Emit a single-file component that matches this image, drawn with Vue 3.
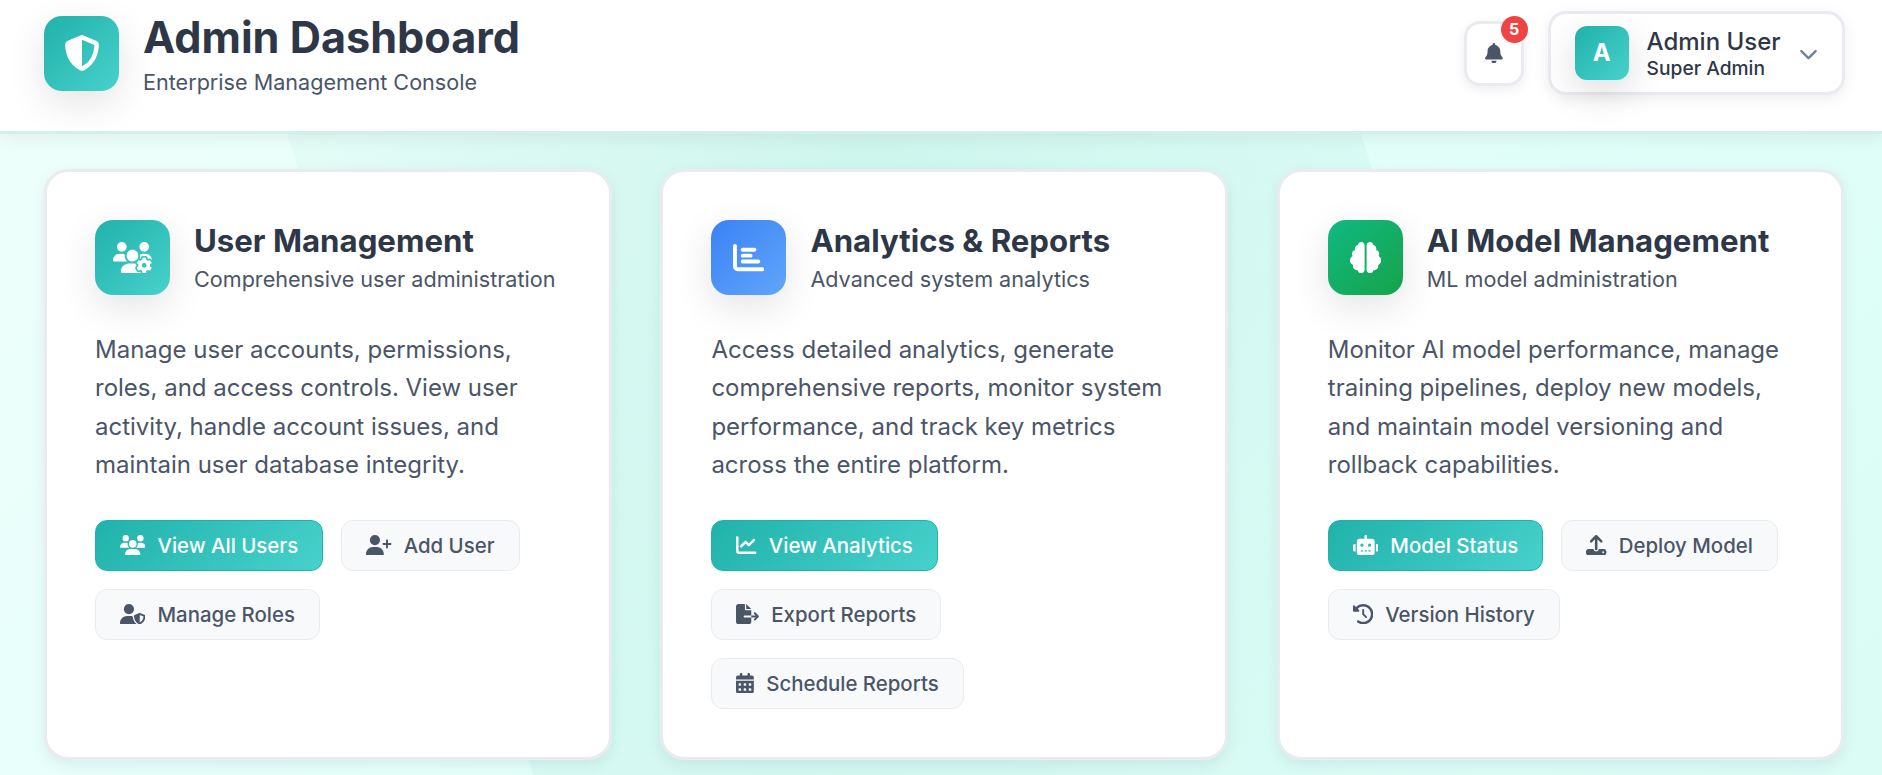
<script setup>
const icons = {
  shield: [512, 'M256 0c4.6 0 9.2 1 13.4 2.9L457.7 82.8c22 9.3 38.4 31 38.3 57.2c-.5 99.2-41.3 280.7-213.6 363.2c-16.7 8-36.1 8-52.8 0C57.3 420.7 16.5 239.2 16 140c-.1-26.2 16.3-47.9 38.3-57.2L242.7 2.9C246.8 1 251.4 0 256 0zm0 66.8V444.8C394 378 431.1 230.1 432 141.4L256 66.8l0 0z'],
  bell: [448, 'M224 0c-17.7 0-32 14.3-32 32V51.2C119 66 64 130.6 64 208v18.8c0 47-17.3 92.4-48.5 127.6l-7.4 8.3c-8.4 9.4-10.4 22.9-5.3 34.4S19.4 416 32 416H416c12.6 0 24-7.4 29.2-18.9s3.1-25-5.3-34.4l-7.4-8.3C401.3 319.2 384 273.9 384 226.8V208c0-77.4-55-142-128-156.8V32c0-17.7-14.3-32-32-32zm45.3 493.3c12-12 18.7-28.3 18.7-45.3H224 160c0 17 6.7 33.3 18.7 45.3s28.3 18.7 45.3 18.7s33.3-6.7 45.3-18.7z'],
  chevron: [512, 'M233.4 406.6c12.5 12.5 32.8 12.5 45.3 0l192-192c12.5-12.5 12.5-32.8 0-45.3s-32.8-12.5-45.3 0L256 338.7 86.6 169.4c-12.5-12.5-32.8-12.5-45.3 0s-12.5 32.8 0 45.3l192 192z'],
  users: [640, 'M144 0a80 80 0 1 1 0 160A80 80 0 1 1 144 0zM512 0a80 80 0 1 1 0 160A80 80 0 1 1 512 0zM0 298.7C0 239.8 47.8 192 106.7 192h42.7c15.9 0 31 3.5 44.6 9.7c-1.3 7.2-1.9 14.7-1.9 22.3c0 38.2 16.8 72.5 43.3 96c-.2 0-.4 0-.7 0H21.3C9.6 320 0 310.4 0 298.7zM405.3 320c-.2 0-.4 0-.7 0c26.6-23.5 43.3-57.8 43.3-96c0-7.6-.7-15-1.9-22.3c13.6-6.3 28.7-9.7 44.6-9.7h42.7C592.2 192 640 239.8 640 298.7c0 11.8-9.6 21.3-21.3 21.3H405.3zM224 224a96 96 0 1 1 192 0 96 96 0 1 1 -192 0zM128 485.3C128 411.7 187.7 352 261.3 352H378.7C452.3 352 512 411.7 512 485.3c0 14.7-11.9 26.7-26.7 26.7H154.7c-14.7 0-26.7-11.9-26.7-26.7z'],
  usersGear: [640, 'M144 160A80 80 0 1 0 144 0a80 80 0 1 0 0 160zm368 0A80 80 0 1 0 512 0a80 80 0 1 0 0 160zM0 298.7C0 310.4 9.6 320 21.3 320H234.7c.2 0 .4 0 .7 0c-26.6-23.5-43.3-57.8-43.3-96c0-7.6 .7-15 1.9-22.3c-13.6-6.3-28.7-9.7-44.6-9.7H106.7C47.8 192 0 239.8 0 298.7zM320 320c24 0 45.9-8.8 62.7-23.3c2.5-3.7 5.2-7.3 8-10.7c2.7-3.3 5.7-6.1 9-8.3C410 262.3 416 243.9 416 224c0-53-43-96-96-96s-96 43-96 96s43 96 96 96zm65.4 60.2c-10.3-5.9-18.1-16.2-20.8-28.2H261.3C187.7 352 128 411.7 128 485.3c0 14.7 11.9 26.7 26.7 26.7H455.2c-2.1-5.2-3.2-10.9-3.2-16.4v-3c-1.3-.7-2.7-1.5-4-2.3l-2.6 1.5c-16.8 9.7-40.5 8-54.7-9.7c-4.5-5.6-8.6-11.5-12.4-17.6l-.1-.2-.1-.2-2.4-4.1-.1-.2-.1-.2c-3.4-6.2-6.4-12.6-9-19.3c-8.2-21.2 2.2-42.6 19-52.3l2.7-1.5c0-.8 0-1.5 0-2.3s0-1.5 0-2.3l-2.7-1.5zM533.3 192H490.7c-15.9 0-31 3.5-44.6 9.7c1.3 7.2 1.9 14.7 1.9 22.3c0 17.4-3.5 33.9-9.7 49c2.5 .9 4.9 2 7.1 3.3l2.6 1.5c1.3-.8 2.6-1.6 4-2.3v-3c0-19.4 13.3-39.1 35.8-42.6c7.9-1.2 16-1.9 24.2-1.9s16.3 .6 24.2 1.9c22.5 3.5 35.8 23.2 35.8 42.6v3c1.3 .7 2.7 1.5 4 2.3l2.6-1.5c16.8-9.7 40.5-8 54.7 9.7c2.3 2.8 4.5 5.8 6.6 8.7c-2.1-57.1-49-102.7-106.6-102.7zm91.3 163.9c6.3-3.6 9.5-11.1 6.8-18c-2.1-5.5-4.6-10.8-7.4-15.9l-2.3-4c-3.1-5.1-6.5-9.9-10.2-14.5c-4.6-5.7-12.7-6.7-19-3L574.4 311c-8.9-7.6-19.1-13.6-30.4-17.6v-21c0-7.3-4.9-13.8-12.1-14.9c-6.5-1-13.1-1.5-19.9-1.5s-13.4 .5-19.9 1.5c-7.2 1.1-12.1 7.6-12.1 14.9v21c-11.2 4-21.5 10-30.4 17.6l-18.2-10.5c-6.3-3.6-14.4-2.6-19 3c-3.7 4.6-7.1 9.5-10.2 14.6l-2.3 3.9c-2.8 5.1-5.3 10.4-7.4 15.9c-2.6 6.8 .5 14.3 6.8 17.9l18.2 10.5c-1 5.7-1.6 11.6-1.6 17.6s.6 11.9 1.6 17.5l-18.2 10.5c-6.3 3.6-9.5 11.1-6.8 17.9c2.1 5.5 4.6 10.7 7.4 15.8l2.4 4.1c3 5.1 6.4 9.9 10.1 14.5c4.6 5.7 12.7 6.7 19 3L449.6 457c8.9 7.6 19.2 13.6 30.4 17.6v21c0 7.3 4.9 13.8 12.1 14.9c6.5 1 13.1 1.5 19.9 1.5s13.4-.5 19.9-1.5c7.2-1.1 12.1-7.6 12.1-14.9v-21c11.2-4 21.5-10 30.4-17.6l18.2 10.5c6.3 3.6 14.4 2.6 19-3c3.7-4.6 7.1-9.4 10.1-14.5l2.4-4.2c2.8-5.1 5.3-10.3 7.4-15.8c2.6-6.8-.5-14.3-6.8-17.9l-18.2-10.5c1-5.7 1.6-11.6 1.6-17.5s-.6-11.9-1.6-17.6l18.2-10.5zM472 384a40 40 0 1 1 80 0 40 40 0 1 1 -80 0z'],
  userPlus: [640, 'M96 128a128 128 0 1 1 256 0A128 128 0 1 1 96 128zM0 482.3C0 383.8 79.8 304 178.3 304h91.4C368.2 304 448 383.8 448 482.3c0 16.4-13.3 29.7-29.7 29.7H29.7C13.3 512 0 498.7 0 482.3zM504 312V248H440c-13.3 0-24-10.7-24-24s10.7-24 24-24h64V136c0-13.3 10.7-24 24-24s24 10.7 24 24v64h64c13.3 0 24 10.7 24 24s-10.7 24-24 24H552v64c0 13.3-10.7 24-24 24s-24-10.7-24-24z'],
  userShield: [640, 'M224 256A128 128 0 1 0 224 0a128 128 0 1 0 0 256zm-45.7 48C79.8 304 0 383.8 0 482.3C0 498.7 13.3 512 29.7 512H418.3c1.8 0 3.5-.2 5.3-.5c-76.3-55.1-99.8-141-103.1-200.2c-16.1-4.8-33.1-7.3-50.7-7.3H178.3zm308.8-78.3l-120 48C358 277.4 352 286.2 352 296c0 63.3 25.9 168.8 134.8 214.2c5.9 2.5 12.6 2.5 18.5 0C614.1 464.8 640 359.3 640 296c0-9.8-6-18.6-15.1-22.3l-120-48c-5.7-2.3-12.1-2.3-17.8 0zM591.4 312c-3.9 50.7-27.2 116.7-95.4 149.7V273.8L591.4 312z'],
  chartBar: [512, 'M32 32c17.7 0 32 14.3 32 32V400c0 8.8 7.2 16 16 16H480c17.7 0 32 14.3 32 32s-14.3 32-32 32H80c-44.2 0-80-35.8-80-80V64C0 46.3 14.3 32 32 32zm96 96c0-17.7 14.3-32 32-32l192 0c17.7 0 32 14.3 32 32s-14.3 32-32 32H160c-17.7 0-32-14.3-32-32zm32 64H288c17.7 0 32 14.3 32 32s-14.3 32-32 32H160c-17.7 0-32-14.3-32-32s14.3-32 32-32zm0 96H416c17.7 0 32 14.3 32 32s-14.3 32-32 32H160c-17.7 0-32-14.3-32-32s14.3-32 32-32z'],
  chartLine: [512, 'M64 64c0-17.7-14.3-32-32-32S0 46.3 0 64V400c0 44.2 35.8 80 80 80H480c17.7 0 32-14.3 32-32s-14.3-32-32-32H80c-8.8 0-16-7.2-16-16V64zm406.6 86.6c12.5-12.5 12.5-32.8 0-45.3s-32.8-12.5-45.3 0L320 210.7l-57.4-57.4c-12.5-12.5-32.8-12.5-45.3 0l-112 112c-12.5 12.5-12.5 32.8 0 45.3s32.8 12.5 45.3 0L240 221.3l57.4 57.4c12.5 12.5 32.8 12.5 45.3 0l128-128z'],
  fileExport: [576, 'M0 64C0 28.7 28.7 0 64 0H224V128c0 17.7 14.3 32 32 32H384V288H216c-13.3 0-24 10.7-24 24s10.7 24 24 24H384V448c0 35.3-28.7 64-64 64H64c-35.3 0-64-28.7-64-64V64zM384 336V288H494.1l-39-39c-9.4-9.4-9.4-24.6 0-33.9s24.6-9.4 33.9 0l80 80c9.4 9.4 9.4 24.6 0 33.9l-80 80c-9.4 9.4-24.6 9.4-33.9 0s-9.4-24.6 0-33.9l39-39H384zm0-208H256V0L384 128z'],
  calendar: [448, 'M128 0c17.7 0 32 14.3 32 32V64H288V32c0-17.7 14.3-32 32-32s32 14.3 32 32V64h48c26.5 0 48 21.5 48 48v48H0V112C0 85.5 21.5 64 48 64H96V32c0-17.7 14.3-32 32-32zM0 192H448V464c0 26.5-21.5 48-48 48H48c-26.5 0-48-21.5-48-48V192zm64 80v32c0 8.8 7.2 16 16 16h32c8.8 0 16-7.2 16-16V272c0-8.8-7.2-16-16-16H80c-8.8 0-16 7.2-16 16zm128 0v32c0 8.8 7.2 16 16 16h32c8.8 0 16-7.2 16-16V272c0-8.8-7.2-16-16-16H208c-8.8 0-16 7.2-16 16zm144-16c-8.8 0-16 7.2-16 16v32c0 8.8 7.2 16 16 16h32c8.8 0 16-7.2 16-16V272c0-8.8-7.2-16-16-16H336zM64 400v32c0 8.8 7.2 16 16 16h32c8.8 0 16-7.2 16-16V400c0-8.8-7.2-16-16-16H80c-8.8 0-16 7.2-16 16zm144-16c-8.8 0-16 7.2-16 16v32c0 8.8 7.2 16 16 16h32c8.8 0 16-7.2 16-16V400c0-8.8-7.2-16-16-16H208zm112 16v32c0 8.8 7.2 16 16 16h32c8.8 0 16-7.2 16-16V400c0-8.8-7.2-16-16-16H336c-8.8 0-16 7.2-16 16z'],
  brain: [512, 'M184 0c30.9 0 56 25.1 56 56V456c0 30.9-25.1 56-56 56c-28.9 0-52.7-21.9-55.7-50.1c-5.2 1.4-10.7 2.1-16.3 2.1c-35.3 0-64-28.7-64-64c0-7.4 1.3-14.6 3.6-21.2C21.4 367.4 0 338.2 0 304c0-31.9 18.7-59.5 45.8-72.3C37.1 220.8 32 207 32 192c0-30.7 21.6-56.3 50.4-62.6C80.8 123.9 80 118 80 112c0-29.9 20.6-55.1 48.3-62.1C131.3 21.9 155.1 0 184 0zM328 0c28.9 0 52.6 21.9 55.7 49.9c27.8 7 48.3 32.1 48.3 62.1c0 6-.8 11.9-2.4 17.4c28.8 6.2 50.4 31.9 50.4 62.6c0 15-5.1 28.8-13.8 39.7C493.3 244.5 512 272.1 512 304c0 34.2-21.4 63.4-51.6 74.8c2.3 6.6 3.6 13.8 3.6 21.2c0 35.3-28.7 64-64 64c-5.6 0-11.1-.7-16.3-2.1c-3 28.2-26.8 50.1-55.7 50.1c-30.9 0-56-25.1-56-56V56c0-30.9 25.1-56 56-56z'],
  robot: [640, 'M320 0c17.7 0 32 14.3 32 32V96H472c39.8 0 72 32.2 72 72V440c0 39.8-32.2 72-72 72H168c-39.8 0-72-32.2-72-72V168c0-39.8 32.2-72 72-72H288V32c0-17.7 14.3-32 32-32zM208 384c-8.8 0-16 7.2-16 16s7.2 16 16 16h32c8.8 0 16-7.2 16-16s-7.2-16-16-16H208zm96 0c-8.8 0-16 7.2-16 16s7.2 16 16 16h32c8.8 0 16-7.2 16-16s-7.2-16-16-16H304zm96 0c-8.8 0-16 7.2-16 16s7.2 16 16 16h32c8.8 0 16-7.2 16-16s-7.2-16-16-16H400zM264 256a40 40 0 1 0 -80 0 40 40 0 1 0 80 0zm152 40a40 40 0 1 0 0-80 40 40 0 1 0 0 80zM48 224H64V416H48c-26.5 0-48-21.5-48-48V272c0-26.5 21.5-48 48-48zm544 0c26.5 0 48 21.5 48 48v96c0 26.5-21.5 48-48 48H576V224h16z'],
  upload: [512, 'M288 109.3V352c0 17.7-14.3 32-32 32s-32-14.3-32-32V109.3l-73.4 73.4c-12.5 12.5-32.8 12.5-45.3 0s-12.5-32.8 0-45.3l128-128c12.5-12.5 32.8-12.5 45.3 0l128 128c12.5 12.5 12.5 32.8 0 45.3s-32.8 12.5-45.3 0L288 109.3zM64 352H192c0 35.3 28.7 64 64 64s64-28.7 64-64H448c35.3 0 64 28.7 64 64v32c0 35.3-28.7 64-64 64H64c-35.3 0-64-28.7-64-64V416c0-35.3 28.7-64 64-64zM432 456a24 24 0 1 0 0-48 24 24 0 1 0 0 48z'],
  history: [512, 'M75 75L41 41C25.9 25.9 0 36.6 0 57.9V168c0 13.3 10.7 24 24 24H134.1c21.4 0 32.1-25.9 17-41l-30.8-30.8C155 85.5 203 64 256 64c106 0 192 86 192 192s-86 192-192 192c-40.8 0-78.6-12.7-109.7-34.4c-14.5-10.1-34.4-6.6-44.6 7.9s-6.6 34.4 7.9 44.6C151.2 495 201.7 512 256 512c141.4 0 256-114.6 256-256S397.4 0 256 0C185.3 0 121.3 28.7 75 75zm181 53c-13.3 0-24 10.7-24 24V256c0 6.4 2.5 12.5 7 17l72 72c9.4 9.4 24.6 9.4 33.9 0s9.4-24.6 0-33.9l-65-65V152c0-13.3-10.7-24-24-24z'],
}

const box = (name) => `0 0 ${icons[name][0]} 512`

const cards = [
  {
    title: 'User Management',
    subtitle: 'Comprehensive user administration',
    icon: 'usersGear',
    tone: 'teal',
    lines: ['Manage user accounts, permissions,', 'roles, and access controls. View user', 'activity, handle account issues, and', 'maintain user database integrity.'],
    actions: [
      { label: 'View All Users', icon: 'users', primary: true },
      { label: 'Add User', icon: 'userPlus' },
      { label: 'Manage Roles', icon: 'userShield' },
    ],
  },
  {
    title: 'Analytics & Reports',
    subtitle: 'Advanced system analytics',
    icon: 'chartBar',
    tone: 'blue',
    lines: ['Access detailed analytics, generate', 'comprehensive reports, monitor system', 'performance, and track key metrics', 'across the entire platform.'],
    actions: [
      { label: 'View Analytics', icon: 'chartLine', primary: true },
      { label: 'Export Reports', icon: 'fileExport' },
      { label: 'Schedule Reports', icon: 'calendar' },
    ],
  },
  {
    title: 'AI Model Management',
    subtitle: 'ML model administration',
    icon: 'brain',
    tone: 'green',
    lines: ['Monitor AI model performance, manage', 'training pipelines, deploy new models,', 'and maintain model versioning and', 'rollback capabilities.'],
    actions: [
      { label: 'Model Status', icon: 'robot', primary: true },
      { label: 'Deploy Model', icon: 'upload' },
      { label: 'Version History', icon: 'history' },
    ],
  },
]
</script>

<template>
  <div class="page">
    <svg class="backdrop" viewBox="0 0 1882 775" preserveAspectRatio="none" aria-hidden="true">
      <defs>
        <radialGradient id="glow-top" gradientUnits="userSpaceOnUse" cx="870" cy="130" r="900">
          <stop offset="0" stop-color="#20b28c" stop-opacity=".12" />
          <stop offset=".6" stop-color="#20b28c" stop-opacity=".045" />
          <stop offset="1" stop-color="#20b28c" stop-opacity="0" />
        </radialGradient>
        <radialGradient id="glow-bottom" gradientUnits="userSpaceOnUse" cx="760" cy="820" r="600">
          <stop offset="0" stop-color="#20b28c" stop-opacity=".05" />
          <stop offset=".4" stop-color="#20b28c" stop-opacity=".04" />
          <stop offset="1" stop-color="#20b28c" stop-opacity="0" />
        </radialGradient>
      </defs>
      <path d="M250 0L287 134L298 169Q390 470 528 760L534 775H1650Q1450 420 1372 169L1361 134L1320 0Z" fill="url(#glow-top)" />
      <path d="M250 0L287 134L298 169Q390 470 528 760L534 775H1650Q1450 420 1372 169L1361 134L1320 0Z" fill="url(#glow-bottom)" />
    </svg>

    <header class="header">
      <div class="brand">
        <div class="tile teal logo">
          <svg :viewBox="box('shield')"><path :d="icons.shield[1]" /></svg>
        </div>
        <div>
          <h1>Admin Dashboard</h1>
          <p class="tagline">Enterprise Management Console</p>
        </div>
      </div>
      <div class="tools">
        <button class="bell">
          <svg :viewBox="box('bell')"><path :d="icons.bell[1]" /></svg>
          <span class="badge">5</span>
        </button>
        <button class="profile">
          <span class="avatar teal">A</span>
          <span class="who">
            <span class="name">Admin User</span>
            <span class="role">Super Admin</span>
          </span>
          <svg class="chev" :viewBox="box('chevron')"><path :d="icons.chevron[1]" /></svg>
        </button>
      </div>
    </header>

    <main class="grid">
      <section v-for="card in cards" :key="card.title" class="card">
        <div class="card-head">
          <div class="tile" :class="card.tone">
            <svg :viewBox="box(card.icon)"><path :d="icons[card.icon][1]" /></svg>
          </div>
          <div>
            <h2>{{ card.title }}</h2>
            <p class="sub">{{ card.subtitle }}</p>
          </div>
        </div>
        <p class="desc"><span v-for="line in card.lines" :key="line">{{ line }}</span></p>
        <div class="actions">
          <button v-for="a in card.actions" :key="a.label" class="btn" :class="{ primary: a.primary }">
            <svg :viewBox="box(a.icon)"><path :d="icons[a.icon][1]" /></svg>
            {{ a.label }}
          </button>
        </div>
      </section>
    </main>
  </div>
</template>

<style>
body {
  margin: 0;
  overflow: hidden;
}
</style>

<style scoped>
.page {
  position: relative;
  height: 775px;
  overflow: hidden;
  font-family: Inter, "Liberation Sans", sans-serif;
  color: #2d3748;
  background: linear-gradient(135deg, #effffb 0%, #e3fffa 50%, #dafcf5 100%);
}
.page * {
  box-sizing: border-box;
}
svg {
  fill: currentColor;
  display: block;
  flex: none;
}
h1, h2, p {
  margin: 0;
}
button {
  font-family: inherit;
}
.backdrop {
  position: absolute;
  inset: 0;
  width: 100%;
  height: 100%;
}
.header {
  position: relative;
  height: 134px;
  padding: 11px 37.4px 0 44px;
  display: flex;
  justify-content: space-between;
  align-items: flex-start;
  background: rgba(255, 255, 255, 0.985);
  background-clip: padding-box;
  border-bottom: 3px solid #d1f0eb;
  box-shadow: 0 5px 16px rgba(0, 0, 0, 0.06);
}
.brand, .tools, .card-head {
  display: flex;
}
.brand {
  padding-top: 5px;
  gap: 24px;
}
.tile {
  width: 75px;
  height: 75px;
  flex: none;
  border-radius: 18px;
  display: flex;
  align-items: center;
  justify-content: center;
  color: #fff;
  box-shadow: 0 12px 38px rgba(0, 0, 0, 0.11);
}
.tile svg {
  height: 31.2px;
}
.logo svg {
  height: 36px;
  margin-top: -2px;
}
.teal {
  background: linear-gradient(135deg, #20b2aa, #48d1cc);
}
.blue {
  background: linear-gradient(135deg, #3b82f6, #60a5fa);
}
.green {
  background: linear-gradient(135deg, #10b981, #16a34a);
}
h1 {
  font-size: 43.2px;
  line-height: 52px;
  font-weight: 700;
  margin-top: -5px;
}
.tagline {
  font-size: 21.6px;
  line-height: 32px;
  color: #4a5568;
  margin-top: 3px;
}
.tools {
  gap: 24px;
}
.bell {
  position: relative;
  width: 60px;
  height: 65px;
  margin-top: 10px;
  padding: 0;
  border: 3px solid #e8ebef;
  border-radius: 16px;
  background: #fff;
  color: #4a5568;
  display: flex;
  align-items: center;
  justify-content: center;
  box-shadow: 0 4px 12px rgba(0, 0, 0, 0.07);
}
.bell svg {
  height: 20.4px;
  margin-top: -1px;
}
.badge {
  position: absolute;
  top: -8px;
  right: -7px;
  width: 27px;
  height: 27px;
  border-radius: 50%;
  background: #ef4444;
  color: #fff;
  font-size: 16px;
  font-weight: 700;
  line-height: 27px;
  text-align: center;
}
.profile {
  width: 297px;
  height: 84px;
  padding: 0 24px;
  border: 3px solid #e8ebef;
  border-radius: 18px;
  background: #fff;
  color: #2d3748;
  display: flex;
  align-items: center;
  box-shadow: 0 4px 15px rgba(0, 0, 0, 0.07);
}
.avatar {
  width: 54px;
  height: 54px;
  border-radius: 12px;
  color: #fff;
  font-size: 24px;
  font-weight: 700;
  line-height: 54px;
  text-align: center;
  box-shadow: 0 12px 38px rgba(0, 0, 0, 0.14);
}
.who {
  display: flex;
  flex-direction: column;
  align-items: flex-start;
  margin-left: 18px;
  padding-top: 2px;
  font-weight: 500;
}
.name {
  font-size: 24px;
  line-height: 29px;
}
.role {
  font-size: 19.2px;
  line-height: 25px;
}
.chev {
  height: 19px;
  margin-left: auto;
  color: #718096;
}
.grid {
  position: relative;
  display: grid;
  grid-template-columns: repeat(3, 1fr);
  gap: 48.8px;
  padding: 35px 37.6px 0 44px;
}
.card {
  height: 591px;
  padding: 48px 0 0 48px;
  border: 3px solid #e8ebef;
  border-radius: 24px;
  background: #fff;
  box-shadow: 0 5px 15px rgba(0, 0, 0, 0.07);
}
.card-head {
  gap: 24px;
}
h2 {
  font-size: 31.2px;
  line-height: 39px;
  font-weight: 700;
  white-space: nowrap;
  margin-top: 1.5px;
}
.sub {
  font-size: 21.6px;
  line-height: 30px;
  color: #4a5568;
  margin-top: 3px;
  white-space: nowrap;
}
.desc {
  margin-top: 36px;
  font-size: 24px;
  line-height: 38.4px;
  color: #4a5568;
}
.desc span {
  display: block;
  white-space: nowrap;
}
.actions {
  display: flex;
  flex-wrap: wrap;
  gap: 18px;
  margin-top: 35px;
  padding-right: 47px;
}
.btn {
  height: 51px;
  padding: 0 24px;
  border: 1px solid #e8ebef;
  border-radius: 12px;
  background: #f8f9fb;
  color: #4a5568;
  font-size: 20.4px;
  font-weight: 500;
  display: flex;
  align-items: center;
  gap: 12px;
  white-space: nowrap;
}
.btn svg {
  height: 20.4px;
}
.btn.primary {
  color: #fff;
  border-color: #20b2aa;
  background: linear-gradient(135deg, #20b2aa, #48d1cc);
}
</style>
